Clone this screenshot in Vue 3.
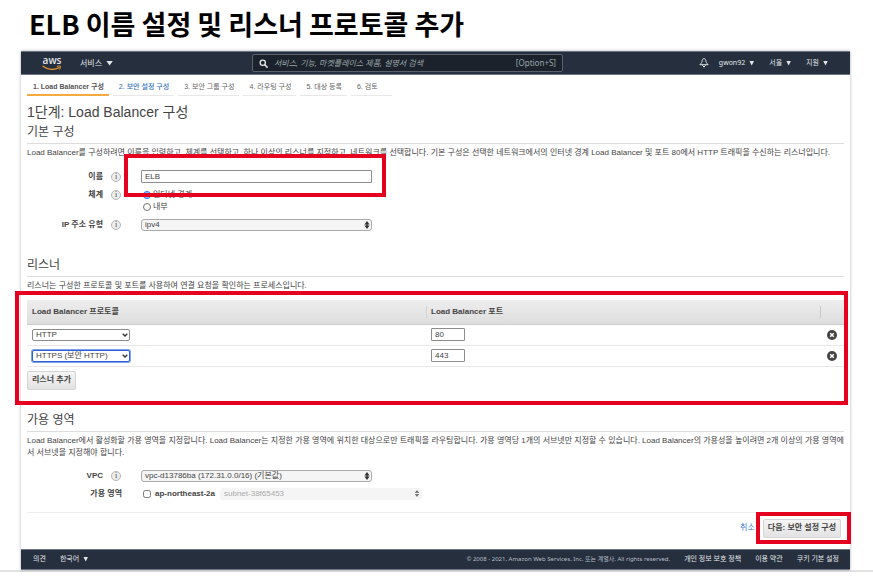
<script setup>
import { ref } from 'vue'

const steps = ['1. Load Balancer 구성', '2. 보안 설정 구성', '3. 보안 그룹 구성', '4. 라우팅 구성', '5. 대상 등록', '6. 검토']
const accountMenus = ['gwon92', '서울', '지원']
const legalLinks = ['개인 정보 보호 정책', '이용 약관', '쿠키 기본 설정']

const name = ref('ELB')
const scheme = ref('public')
const listeners = ref([
  { protocol: 'HTTP', port: '80' },
  { protocol: 'HTTPS (보안 HTTP)', port: '443' },
])
</script>

<template>
  <div class="slide">
    <h1 class="slide-title">ELB 이름 설정 및 리스너 프로토콜 추가</h1>

    <div class="console">
      <header class="topbar">
        <a class="logo" href="#" aria-label="aws">
          <span>aws</span>
          <svg viewBox="0 0 20 6" aria-hidden="true">
            <path d="M1 1.2C6 5 12.500 5.300 17.300 2.500" fill="none" stroke="#e8962e" stroke-width="1.300" stroke-linecap="round" />
            <path d="M15.200 1.300c1.500-.5 2.900-.5 3.300-.1.300.5-.1 2-.9 3.100" fill="none" stroke="#e8962e" stroke-width="1" stroke-linecap="round" />
          </svg>
        </a>
        <button class="menu services" type="button">서비스 <i class="caret"></i></button>
        <label class="search">
          <svg viewBox="0 0 10 10" aria-hidden="true">
            <circle cx="4.200" cy="4.200" r="2.900" fill="none" stroke="#e4e6e8" stroke-width="1.500" />
            <path d="M6.400 6.400 9 9" stroke="#e4e6e8" stroke-width="1.700" stroke-linecap="round" />
          </svg>
          <input type="search" aria-label="검색" placeholder="서비스, 기능, 마켓플레이스 제품, 설명서 검색" />
          <span>[Option+S]</span>
        </label>
        <nav class="account">
          <button class="bell" type="button" aria-label="알림">
            <svg viewBox="0 0 10 10" aria-hidden="true">
              <path d="M5 .5C3.600.9 3.200 2 3.100 3.300 3 4.600 2 5.300.9 6.700h8.200C8 5.300 7 4.600 6.900 3.300 6.800 2 6.400.9 5 .5z" fill="none" stroke="#dfe2e5" stroke-width="1" stroke-linejoin="round" />
              <path d="M3.500 7.200 5 9.200l1.500-2" fill="none" stroke="#dfe2e5" stroke-width="1" />
            </svg>
          </button>
          <button v-for="item in accountMenus" :key="item" class="menu" type="button">{{ item }} <i class="caret"></i></button>
        </nav>
      </header>

      <main class="content">
        <nav class="steps">
          <a v-for="(step, i) in steps" :key="step" href="#" :class="{ active: i === 0, next: i === 1 }">{{ step }}</a>
        </nav>

        <h2 class="page-title">1단계: Load Balancer 구성</h2>

        <section class="basic">
          <h3>기본 구성</h3>
          <p>Load Balancer를 구성하려면 이름을 입력하고, 체계를 선택하고, 하나 이상의 리스너를 지정하고, 네트워크를 선택합니다. 기본 구성은 선택한 네트워크에서의 인터넷 경계 Load Balancer 및 포트 80에서 HTTP 트래픽을 수신하는 리스너입니다.</p>
          <div class="form">
            <div class="field">
              <label for="lb-name">이름</label>
              <span class="info">i</span>
              <input id="lb-name" v-model="name" class="textbox" type="text" />
              <div class="mark mark-name"></div>
            </div>
            <div class="field scheme" role="radiogroup" aria-labelledby="scheme-label">
              <span id="scheme-label" class="label">체계</span>
              <span class="info">i</span>
              <div class="radios">
                <label><input v-model="scheme" type="radio" name="scheme" value="public" />인터넷 경계</label>
                <label><input v-model="scheme" type="radio" name="scheme" value="internal" />내부</label>
              </div>
            </div>
            <div class="field">
              <label for="ip-type">IP 주소 유형</label>
              <span class="info">i</span>
              <span class="picker">
                <select id="ip-type"><option>ipv4</option></select>
                <svg class="updown" viewBox="0 0 6 8" aria-hidden="true"><path d="M3 0 5.600 3.400H.4zM3 8 .4 4.600h5.200z" /><path d="M2.300 3h1.400v2H2.300z" /></svg>
              </span>
            </div>
          </div>
        </section>

        <section class="listeners">
          <h3>리스너</h3>
          <p>리스너는 구성한 프로토콜 및 포트를 사용하여 연결 요청을 확인하는 프로세스입니다.</p>
          <div class="listener-area">
            <table>
              <thead>
                <tr>
                  <th class="col-protocol">Load Balancer 프로토콜</th>
                  <th class="col-port">Load Balancer 포트</th>
                  <th class="col-remove"></th>
                </tr>
              </thead>
              <tbody>
                <tr v-for="(row, i) in listeners" :key="i">
                  <td>
                    <span class="picker protocol" :class="{ focused: i === 1 }">
                      <select :aria-label="'프로토콜 ' + (i + 1)"><option>{{ row.protocol }}</option></select>
                      <svg class="chevron" viewBox="0 0 6 4" aria-hidden="true"><path d="M.7.7 3 3 5.300.7" /></svg>
                    </span>
                  </td>
                  <td><input v-model="row.port" class="textbox port" type="text" :aria-label="'포트 ' + (i + 1)" /></td>
                  <td class="col-remove">
                    <button class="remove" type="button" aria-label="삭제">
                      <svg viewBox="0 0 10 10" aria-hidden="true"><circle cx="5" cy="5" r="5" fill="#444" /><path d="m3.200 3.200 3.600 3.600m0-3.600L3.200 6.800" stroke="#fff" stroke-width="1.500" /></svg>
                    </button>
                  </td>
                </tr>
              </tbody>
            </table>
            <button class="btn add" type="button">리스너 추가</button>
            <div class="mark mark-listeners"></div>
          </div>
        </section>

        <section class="zones">
          <h3>가용 영역</h3>
          <p>Load Balancer에서 활성화할 가용 영역을 지정합니다. Load Balancer는 지정한 가용 영역에 위치한 대상으로만 트래픽을 라우팅합니다. 가용 영역당 1개의 서브넷만 지정할 수 있습니다. Load Balancer의 가용성을 높이려면 2개 이상의 가용 영역에서 서브넷을 지정해야 합니다.</p>
          <div class="form">
            <div class="field">
              <label for="vpc">VPC</label>
              <span class="info">i</span>
              <span class="picker">
                <select id="vpc"><option>vpc-d13786ba (172.31.0.0/16) (기본값)</option></select>
                <svg class="updown" viewBox="0 0 6 8" aria-hidden="true"><path d="M3 0 5.600 3.400H.4zM3 8 .4 4.600h5.200z" /><path d="M2.300 3h1.400v2H2.300z" /></svg>
              </span>
            </div>
            <div class="field">
              <span class="label wide">가용 영역</span>
              <label class="zone"><input type="checkbox" />ap-northeast-2a</label>
              <span class="picker subnet">
                <select aria-label="서브넷" disabled><option>subnet-38f65453</option></select>
                <svg class="updown" viewBox="0 0 6 8" aria-hidden="true"><path d="M3 0 5.600 3.400H.4zM3 8 .4 4.600h5.200z" /></svg>
              </span>
            </div>
          </div>
        </section>

        <div class="actions">
          <a href="#">취소</a>
          <div class="next-step">
            <button class="btn" type="button">다음: 보안 설정 구성</button>
            <div class="mark mark-next"></div>
          </div>
        </div>
      </main>

      <footer class="bottombar">
        <a href="#">의견</a>
        <button class="menu" type="button">한국어 <i class="caret"></i></button>
        <span class="copyright">© 2008 - 2021, Amazon Web Services, Inc. 또는 계열사. All rights reserved.</span>
        <a v-for="link in legalLinks" :key="link" href="#">{{ link }}</a>
      </footer>
    </div>
  </div>
</template>

<style>
body {
  margin: 0;
  background: #fff;
}
</style>

<style scoped>
* {
  box-sizing: border-box;
}

.slide {
  padding-top: 4px;
  border-bottom: 2px solid #e2e2e2;
  font-family: "Liberation Sans", "Noto Sans CJK KR", sans-serif;
  font-size: 8px;
  line-height: 12px;
  color: #444;
}

h1, h2, h3, p {
  margin: 0;
  font-weight: 400;
}

a {
  color: inherit;
  text-decoration: none;
}

button, input, select {
  margin: 0;
  font: inherit;
  color: inherit;
}

.slide-title {
  padding-left: 29px;
  font-family: "Noto Sans CJK KR", sans-serif;
  font-size: 27px;
  line-height: 40px;
  font-weight: 700;
  color: #000;
}

.console {
  margin: 7px 23px 0 21px;
  box-shadow: 0 0 3px rgba(0, 0, 0, 0.3);
}

.topbar, .bottombar {
  display: flex;
  align-items: center;
  background: #252f3e;
  border: 1px solid #6d7684;
  border-width: 1px 0;
  color: #e4e6e8;
  font-family: "Noto Sans", "Noto Sans CJK KR", sans-serif;
  font-size: 7px;
}

.topbar {
  height: 24px;
}

.logo {
  display: flex;
  flex-direction: column;
  align-items: center;
  width: 20px;
  margin-left: 21px;
  font-family: "Open Sans", sans-serif;
  font-size: 10px;
  line-height: 9px;
  font-weight: 600;
}

.logo svg {
  width: 20px;
  height: 6px;
}

.menu {
  display: flex;
  align-items: center;
  gap: 4px;
  padding: 0;
  border: 0;
  background: none;
  white-space: nowrap;
}

.services {
  width: 172px;
  padding-left: 18px;
  font-size: 8px;
}

.caret {
  width: 5px;
  height: 5px;
  background: #e4e6e8;
  clip-path: polygon(0 0, 100% 0, 50% 100%);
}

.services .caret {
  width: 7px;
}

.search {
  display: flex;
  align-items: center;
  flex: 0 1 311px;
  height: 18px;
  margin: 0 auto 0 18px;
  padding: 0 6px;
  border: 1px solid #59626c;
  border-radius: 2px;
  background: #1b222c;
  color: #9da7a9;
  font-size: 8px;
}

.search svg {
  width: 9px;
  height: 9px;
}

.search input {
  flex: 1;
  min-width: 0;
  padding: 0 0 0 6px;
  border: 0;
  outline: 0;
  background: none;
  font-style: italic;
}

.search input::placeholder {
  color: #9da7a9;
}

.account {
  display: flex;
  align-items: center;
  gap: 15px;
  margin-right: 22px;
}

.bell {
  display: flex;
  margin-right: -5px;
  padding: 0;
  border: 0;
  background: none;
}

.bell svg {
  width: 10px;
  height: 10px;
}

.content {
  padding: 6px 6px 0;
}

.steps {
  display: flex;
  gap: 4px;
  font-size: 7px;
}

.steps a {
  height: 15px;
  padding: 0 5px 0 6px;
  border-bottom: 1px solid #e8e8e8;
  color: #666;
  white-space: nowrap;
}

.steps a:last-child {
  padding-right: 14px;
}

.steps .active {
  border-bottom: 2px solid #f5ab40;
  font-weight: 700;
  color: #555;
}

.steps .next {
  font-weight: 500;
  color: #2f6fc0;
}

.page-title {
  margin-top: 6px;
  font-size: 14px;
  line-height: 20px;
}

h3 {
  height: 22px;
  border-bottom: 1px solid #ddd;
  font-size: 12px;
  line-height: 20px;
}

p {
  padding-top: 3px;
}

.form {
  display: flex;
  flex-direction: column;
  gap: 6px;
}

.basic .form {
  padding-top: 11px;
}

.field {
  position: relative;
  display: flex;
  align-items: center;
}

.field > label:first-child, .field > .label {
  width: 76px;
  font-weight: 700;
  text-align: right;
}

.field > .label.wide {
  width: 95px;
}

.info {
  width: 10px;
  height: 10px;
  margin: 0 20px 0 8px;
  border: 1px solid #b5b5b5;
  border-radius: 50%;
  background: #eee;
  font-family: "Liberation Serif", serif;
  font-size: 8px;
  line-height: 8px;
  text-align: center;
}

.textbox {
  width: 231px;
  height: 13px;
  padding: 0 3px;
  border: 1px solid #8c8c8c;
  border-radius: 1px;
  background: #fff;
}

.scheme {
  align-items: flex-start;
}

.scheme .info {
  margin-top: 1px;
}

.radios {
  display: flex;
  flex-direction: column;
}

.radios label, .zone {
  display: flex;
  align-items: center;
}

.radios input, .zone input {
  width: 8px;
  height: 8px;
  margin: 0 2px;
}

.picker {
  position: relative;
  display: flex;
  width: 231px;
}

.picker select {
  width: 100%;
  height: 12px;
  padding: 0 3px;
  border: 1px solid #aaa;
  border-radius: 3px;
  background: #f5f5f5;
  appearance: none;
  line-height: 10px;
}

.updown {
  position: absolute;
  top: 2px;
  right: 2px;
  width: 6px;
  height: 8px;
  fill: #333;
}

.picker.protocol {
  width: 98px;
}

.protocol select {
  border-color: #8c8c8c;
  border-radius: 2px;
  background: #fff;
}

.protocol.focused select {
  border-color: #2c62d6;
  box-shadow: 0 0 0 1px #7da2ec;
}

.chevron {
  position: absolute;
  top: 4px;
  right: 2px;
  width: 6px;
  height: 4px;
  fill: none;
  stroke: #333;
  stroke-width: 1.4;
}

.listeners {
  margin-top: 24px;
}

.listener-area {
  position: relative;
  margin-top: 8px;
  padding-bottom: 15px;
}

table {
  width: 100%;
  border-collapse: collapse;
  table-layout: fixed;
}

th {
  height: 24px;
  padding: 0 5px;
  border-bottom: 1px solid #ccc;
  background: linear-gradient(#eee, #ddd);
  text-align: left;
}

td {
  height: 21px;
  padding: 0 5px;
  border-bottom: 1px solid #e8e8e8;
}

.col-protocol {
  width: 399px;
}

.col-remove {
  width: 24px;
  padding: 0 7px;
}

th.col-remove {
  background: linear-gradient(#c8c8c8, #c8c8c8) 0 50% / 1px 12px no-repeat, linear-gradient(#eee, #ddd);
}

th.col-port {
  background: linear-gradient(#d4d4d4, #d4d4d4) 0 50% / 1px 12px no-repeat, linear-gradient(#eee, #ddd);
}

.port {
  display: block;
  width: 34px;
}

.remove {
  display: flex;
  padding: 0;
  border: 0;
  background: none;
}

.remove svg {
  width: 10px;
  height: 10px;
}

.btn {
  display: block;
  height: 19px;
  padding: 0 4px;
  border: 1px solid #d5d5d5;
  border-radius: 2px;
  background: linear-gradient(#f5f5f5, #e2e2e2);
  font-weight: 700;
  white-space: nowrap;
}

.add {
  margin-top: 4px;
}

.mark {
  position: absolute;
  border: 4px solid #e60020;
  pointer-events: none;
}

.mark-name {
  top: -16px;
  left: 97px;
  z-index: 1;
  width: 262px;
  height: 43px;
}

.mark-listeners {
  inset: -9px -4px 0 -12px;
}

.zones {
  margin-top: 5px;
}

.zones .form {
  padding-top: 11px;
}

.zone {
  margin-left: 19px;
  font-weight: 700;
}

.zone input {
  margin-right: 4px;
}

.picker.subnet {
  width: 202px;
  margin-left: 5px;
}

.subnet select {
  border-color: #f5f5f5;
  color: #aaa;
  opacity: 1;
}

.subnet .updown {
  fill: #777;
  height: 7px;
}

.actions {
  display: flex;
  align-items: center;
  justify-content: flex-end;
  gap: 8px;
  margin-top: 12px;
  padding: 6px 3px 11px 0;
  border-top: 1px solid #eee;
}

.actions a {
  color: #3478dc;
}

.next-step {
  position: relative;
}

.mark-next {
  inset: -7px -10px -6px -7px;
}

.bottombar {
  gap: 14px;
  height: 21px;
  padding: 0 11px 0 12px;
}

.copyright {
  margin-left: auto;
  color: #b9bec5;
  font-size: 6px;
}
</style>
